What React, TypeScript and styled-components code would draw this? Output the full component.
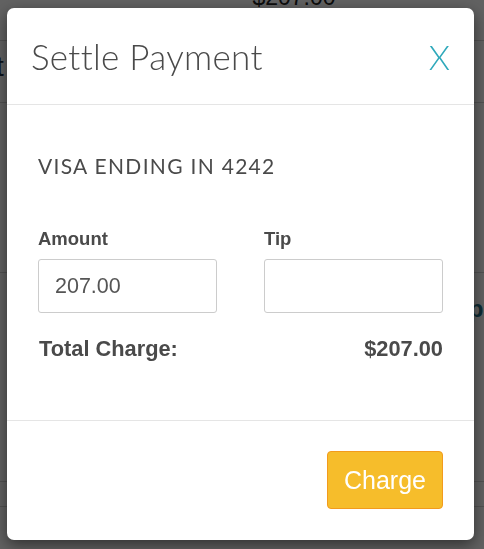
import styled, { createGlobalStyle } from "styled-components";

const GlobalStyle = createGlobalStyle`
  html, body {
    margin: 0;
    padding: 0;
    background: #ffffff;
    font-family: "Liberation Sans", Arial, sans-serif;
  }
`;

export default function App() {
  return (
    <>
      <GlobalStyle />
      <StPage>
        <StTopRow>
          <StPageAmount>$207.00</StPageAmount>
        </StTopRow>
        <StRow $height={52}>
          <StPageText>t</StPageText>
        </StRow>
        <StRow $height={170} />
        <StRow $height={187}>
          <StPageLink>p,</StPageLink>
        </StRow>
        <StRow $height={25} />
        <StRow $height={53} />
        <StRow $height={40} />
      </StPage>

      <StOverlay>
        <StModal>
          <StHeader>
            <StTitle>Settle Payment</StTitle>
            <StClose>X</StClose>
          </StHeader>

          <StBody>
            <StCardLine>VISA ENDING IN 4242</StCardLine>
            <StFields>
              <StField>
                <StLabel>Amount</StLabel>
                <StInput defaultValue="207.00" />
              </StField>
              <StField>
                <StLabel>Tip</StLabel>
                <StInput defaultValue="" />
              </StField>
            </StFields>
            <StTotal>
              <span>Total Charge:</span>
              <span>$207.00</span>
            </StTotal>
          </StBody>

          <StFooter>
            <StChargeButton>Charge</StChargeButton>
          </StFooter>
        </StModal>
      </StOverlay>
    </>
  );
}

const StPage = styled.div`
  width: 484px;
  height: 549px;
  overflow: hidden;
  background: #ffffff;
`;

const StTopRow = styled.div`
  height: 41px;
  border-bottom: 1px solid #d4d4d4;
  box-sizing: border-box;
  display: flex;
  justify-content: center;
  align-items: flex-start;
`;

const StPageAmount = styled.span`
  margin-top: -16px;
  margin-left: 104px;
  font-size: 23px;
  color: #222;
`;

const StRow = styled.div<{ $height: number }>`
  height: ${(p) => p.$height}px;
  border-bottom: 1px solid #d4d4d4;
  box-sizing: border-box;
`;

const StPageText = styled.span`
  display: block;
  margin-top: 10px;
  margin-left: -4px;
  font-size: 28px;
  color: #1c2f44;
`;

const StPageLink = styled.span`
  display: block;
  margin-top: 22px;
  text-align: right;
  margin-right: -6px;
  font-size: 24px;
  font-weight: bold;
  color: #1f6f86;
`;

const StOverlay = styled.div`
  position: fixed;
  inset: 0;
  background: rgba(0, 0, 0, 0.62);
  padding: 8px 10px 0 7px;
`;

const StModal = styled.div`
  width: 467px;
  height: 532px;
  background: #ffffff;
  border-radius: 7px;
  box-shadow: 0 5px 15px rgba(0, 0, 0, 0.5);
  display: flex;
  flex-direction: column;
  overflow: hidden;
`;

const StHeader = styled.div`
  height: 97px;
  border-bottom: 1px solid #e5e5e5;
  display: flex;
  align-items: center;
  justify-content: space-between;
  padding: 0 24px 0 24px;
  box-sizing: border-box;
`;

const StTitle = styled.h2`
  margin: 0;
  font-family: Lato, "Open Sans", sans-serif;
  font-weight: 300;
  font-size: 35px;
  color: #4a4a4a;
  letter-spacing: 0.3px;
`;

const StClose = styled.span`
  font-family: Lato, "Open Sans", sans-serif;
  font-weight: 300;
  font-size: 34px;
  color: #2fa9bb;
  cursor: pointer;
`;

const StBody = styled.div`
  height: 316px;
  border-bottom: 1px solid #e5e5e5;
  box-sizing: border-box;
  padding: 48px 31px 0 31px;
`;

const StCardLine = styled.div`
  font-family: Lato, "Open Sans", sans-serif;
  font-size: 21px;
  letter-spacing: 1.3px;
  color: #4a4a4a;
  line-height: 26px;
`;

const StFields = styled.div`
  display: grid;
  grid-template-columns: 179px 179px;
  justify-content: space-between;
  margin-top: 49px;
`;

const StField = styled.div`
  display: flex;
  flex-direction: column;
`;

const StLabel = styled.label`
  font-weight: bold;
  font-size: 18.5px;
  color: #4a4a4a;
  line-height: 22px;
  margin-bottom: 9px;
`;

const StInput = styled.input`
  box-sizing: border-box;
  width: 179px;
  height: 54px;
  border: 1px solid #cccccc;
  border-radius: 3px;
  padding: 0 16px;
  font-family: "Liberation Sans", Arial, sans-serif;
  font-size: 21.5px;
  color: #555555;
  outline: none;
`;

const StTotal = styled.div`
  display: flex;
  justify-content: space-between;
  margin-top: 23px;
  padding-left: 1px;
  font-weight: bold;
  font-size: 21.8px;
  color: #4a4a4a;
  line-height: 26px;
`;

const StFooter = styled.div`
  flex: 1;
  display: flex;
  justify-content: flex-end;
  align-items: flex-start;
  padding: 30px 31px 0 0;
`;

const StChargeButton = styled.button`
  width: 116px;
  height: 58px;
  background: #f6bd2b;
  border: 1px solid #f29b1d;
  border-radius: 4px;
  color: #ffffff;
  font-family: "Liberation Sans", Arial, sans-serif;
  font-size: 25px;
  cursor: pointer;
`;
